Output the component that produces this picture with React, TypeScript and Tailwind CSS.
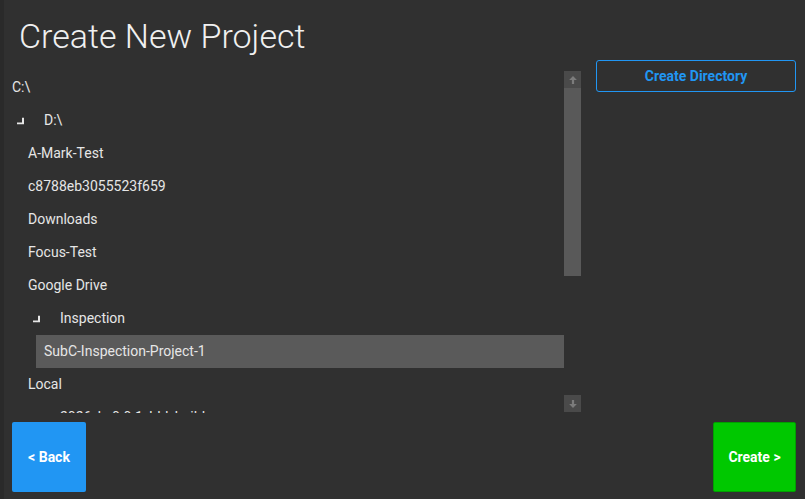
import React from 'react';

type Node = { label: string; text: number; glyph?: number; selected?: boolean };

const rows: Node[] = [
  { label: 'C:\\', text: 8 },
  { label: 'D:\\', text: 40, glyph: 13 },
  { label: 'A-Mark-Test', text: 24 },
  { label: 'c8788eb3055523f659', text: 24 },
  { label: 'Downloads', text: 24 },
  { label: 'Focus-Test', text: 24 },
  { label: 'Google Drive', text: 24 },
  { label: 'Inspection', text: 56, glyph: 29 },
  { label: 'SubC-Inspection-Project-1', text: 40, selected: true },
  { label: 'Local', text: 24 },
  { label: '2026_b_0.0.1_bld_build', text: 56 },
];

function Expanded() {
  return (
    <svg width="7" height="7" viewBox="0 0 7 7" className="absolute top-1/2 -translate-y-1/2">
      <path d="M5 0h2v7H0V5h5z" fill="#e6e6e6" />
    </svg>
  );
}

function Arrow({ up }: { up?: boolean }) {
  return (
    <svg width="10" height="10" viewBox="0 0 9 9" className={up ? '' : 'rotate-180'}>
      <path d="M4.5 1L1 4.5h2.5V8h2V4.5H8z" fill="#7c7c7c" />
    </svg>
  );
}

export default function App() {
  return (
    <div
      className="w-[805px] h-[499px] bg-[#303030] border-l-4 border-[#2a2a2a] flex flex-col overflow-hidden text-[#e6e6e6]"
      style={{ fontFamily: 'Roboto, "Noto Sans", sans-serif' }}
    >
      <div className="h-[60px] pl-[15px] pt-[16px]">
        <h1 className="text-[34px] leading-[40px] font-light text-[#f0f0f0]">Create New Project</h1>
      </div>

      <div className="flex h-[353px]">
        <div className="flex mt-[11px] h-[342px]">
          <div className="w-[560px] overflow-hidden">
            {rows.map((r) => (
              <div key={r.label} className="relative h-[33px] flex items-center text-[14px]">
                {r.glyph !== undefined && (
                  <span style={{ left: r.glyph }} className="absolute top-0 h-full">
                    <Expanded />
                  </span>
                )}
                {r.selected ? (
                  <div className="ml-[32px] flex-1 h-full flex items-center pl-[8px] bg-[#5a5a5a]">{r.label}</div>
                ) : (
                  <span style={{ paddingLeft: r.text }}>{r.label}</span>
                )}
              </div>
            ))}
          </div>
          <div className="w-[17px] flex flex-col">
            <div className="h-[17px] bg-[#4a4a4a] flex items-center justify-center">
              <Arrow up />
            </div>
            <div className="h-[188px] bg-[#595959]" />
            <div className="flex-1" />
            <div className="h-[17px] bg-[#4a4a4a] flex items-center justify-center mb-[1px]">
              <Arrow />
            </div>
          </div>
        </div>
        <div className="ml-[15px] w-[200px]">
          <button className="w-full h-[32px] border border-[#2196f3] rounded-[3px] text-[#2196f3] text-[14px] font-bold">
            Create Directory
          </button>
        </div>
      </div>

      <div className="flex justify-between mt-[9px] pl-[8px] pr-[9px]">
        <button className="w-[74px] h-[70px] bg-[#2196f3] rounded-[2px] text-white text-[14px] font-bold">
          &lt; Back
        </button>
        <button className="w-[83px] h-[70px] bg-[#00c800] border border-[#00a000] rounded-[2px] text-white text-[14px] font-bold">
          Create &gt;
        </button>
      </div>
    </div>
  );
}
